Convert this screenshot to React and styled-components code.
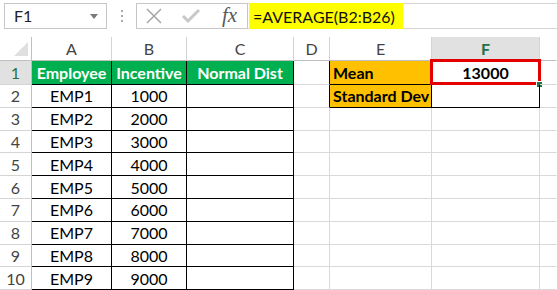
import React from 'react';
import styled, { createGlobalStyle } from 'styled-components';

const GlobalStyle = createGlobalStyle`
  html, body {
    margin: 0;
    padding: 0;
    background: #ffffff;
  }
  body {
    font-family: Lato, "Liberation Sans", sans-serif;
    overflow: hidden;
  }
`;

const GRID = '#d9d9d9';
const BLACK = '#000000';

const columns = ['A', 'B', 'C', 'D', 'E', 'F', ''];

const rows = [
  ['Employee', 'Incentive', 'Normal Dist', '', 'Mean', '13000', ''],
  ['EMP1', '1000', '', '', 'Standard Dev', '', ''],
  ['EMP2', '2000', '', '', '', '', ''],
  ['EMP3', '3000', '', '', '', '', ''],
  ['EMP4', '4000', '', '', '', '', ''],
  ['EMP5', '5000', '', '', '', '', ''],
  ['EMP6', '6000', '', '', '', '', ''],
  ['EMP7', '7000', '', '', '', '', ''],
  ['EMP8', '8000', '', '', '', '', ''],
  ['EMP9', '9000', '', '', '', '', ''],
];

function cellStyle(r, c) {
  // c: 0 = A ... 6 = G
  const s = { bg: 'transparent', color: '#000', bold: false, align: 'center', br: GRID, bb: GRID };
  if (c <= 2) {
    s.br = BLACK;
    s.bb = BLACK;
    if (r === 0) {
      s.bg = '#00b050';
      s.color = '#ffffff';
      s.bold = true;
    }
  }
  if (c === 3 && r <= 1) s.br = BLACK;
  if ((c === 4 || c === 5) && r <= 1) {
    s.br = BLACK;
    s.bb = BLACK;
  }
  if (c === 4 && r <= 1) {
    s.bg = '#ffc000';
    s.bold = true;
    s.align = 'left';
  }
  if (c === 5 && r === 0) s.bold = true;
  if (c === 6) s.br = 'transparent';
  return s;
}

function App() {
  return (
    <>
      <GlobalStyle />
      <Page>
        <FormulaBar>
          <NameBox>
            F1
            <DropArrow />
          </NameBox>
          <Grip>
            <span />
            <span />
            <span />
          </Grip>
          <FxBox>
            <svg width="18" height="18" viewBox="0 0 18 18">
              <path d="M2 2 L16 16 M16 2 L2 16" stroke="#a6a6a6" strokeWidth="1.5" fill="none" />
            </svg>
            <svg width="20" height="16" viewBox="0 0 20 16">
              <path d="M2 8 L7 13 L18 2" stroke="#c8c8c8" strokeWidth="3" fill="none" />
            </svg>
            <FxLabel>fx</FxLabel>
          </FxBox>
          <FormulaInput>
            <Highlight>=AVERAGE(B2:B26)</Highlight>
          </FormulaInput>
        </FormulaBar>

        <Sheet>
          <Corner>
            <CornerTriangle />
          </Corner>
          {columns.map((col, i) => (
            <ColHeader key={i} $active={col === 'F'} $last={i === columns.length - 1}>
              {col}
            </ColHeader>
          ))}

          {rows.map((row, r) => (
            <React.Fragment key={r}>
              <RowHeader $active={r === 0}>{r + 1}</RowHeader>
              {row.map((val, c) => {
                const s = cellStyle(r, c);
                return (
                  <Cell
                    key={c}
                    $bg={s.bg}
                    $color={s.color}
                    $bold={s.bold}
                    $align={s.align}
                    $br={s.br}
                    $bb={s.bb}
                  >
                    {val}
                    {r === 0 && c === 5 && (
                      <>
                        <Selection />
                        <FillHandle />
                      </>
                    )}
                  </Cell>
                );
              })}
            </React.Fragment>
          ))}
        </Sheet>
      </Page>
    </>
  );
}

const Page = styled.div`
  width: 557px;
  height: 290px;
  overflow: hidden;
  background: #ffffff;
`;

const FormulaBar = styled.div`
  display: flex;
  align-items: flex-start;
  height: 37px;
  padding-top: 3px;
  box-sizing: border-box;
`;

const NameBox = styled.div`
  position: relative;
  margin-left: 4px;
  width: 103px;
  height: 26px;
  box-sizing: border-box;
  border: 1px solid #c6c6c6;
  padding-left: 9px;
  font-size: 16px;
  line-height: 24px;
  color: #222;
`;

const DropArrow = styled.span`
  position: absolute;
  right: 8px;
  top: 10px;
  width: 0;
  height: 0;
  border-left: 4px solid transparent;
  border-right: 4px solid transparent;
  border-top: 5px solid #7a7a7a;
`;

const Grip = styled.div`
  width: 29px;
  height: 26px;
  display: flex;
  flex-direction: column;
  align-items: center;
  justify-content: center;
  gap: 3px;
  span {
    width: 2px;
    height: 2px;
    background: #a8a8a8;
  }
`;

const FxBox = styled.div`
  width: 112px;
  height: 26px;
  box-sizing: border-box;
  border: 1px solid #c6c6c6;
  display: flex;
  align-items: center;
  gap: 17px;
  padding: 0 0 0 8px;
  svg:nth-child(2) {
    margin-left: 1px;
  }
`;

const FxLabel = styled.span`
  font-family: "Liberation Serif", serif;
  font-style: italic;
  font-size: 21px;
  color: #595959;
  line-height: 20px;
  padding-bottom: 2px;
  margin-left: 4px;
`;

const FormulaInput = styled.div`
  flex: 1;
  height: 26px;
  box-sizing: border-box;
  border-top: 1px solid #d4d4d4;
  border-bottom: 1px solid #d4d4d4;
  display: flex;
`;

const Highlight = styled.div`
  margin: -1px 0 -1px 1px;
  width: 154px;
  background: #ffff00;
  font-size: 16px;
  line-height: 27px;
  padding-left: 4px;
  box-sizing: border-box;
  color: #111;
  white-space: nowrap;
`;

const Sheet = styled.div`
  display: grid;
  grid-template-columns: 32px 80px 75px 107px 36px 102px 108px 17px;
  grid-template-rows: 24px 24px repeat(9, 22.8px);
`;

const Corner = styled.div`
  position: relative;
  border-right: 1px solid #bfbfbf;
  border-bottom: 1px solid #bfbfbf;
`;

const CornerTriangle = styled.div`
  position: absolute;
  right: 3px;
  bottom: 4px;
  width: 0;
  height: 0;
  border-left: 14px solid transparent;
  border-bottom: 14px solid #dfdfdf;
`;

const ColHeader = styled.div`
  display: flex;
  align-items: center;
  justify-content: center;
  font-size: 16px;
  color: ${(p) => (p.$active ? '#217346' : '#444444')};
  font-weight: ${(p) => (p.$active ? 700 : 400)};
  background: ${(p) => (p.$active ? '#e1e1e1' : '#ffffff')};
  border-right: 1px solid ${(p) => (p.$last ? 'transparent' : '#d4d4d4')};
  border-bottom: 1px solid #bfbfbf;
`;

const RowHeader = styled.div`
  display: flex;
  align-items: center;
  justify-content: center;
  font-size: 16px;
  color: ${(p) => (p.$active ? '#217346' : '#444444')};
  background: ${(p) => (p.$active ? '#e1e1e1' : '#ffffff')};
  border-right: 1px solid #bfbfbf;
  border-bottom: 1px solid #d4d4d4;
`;

const Cell = styled.div`
  position: relative;
  display: flex;
  align-items: center;
  justify-content: ${(p) => (p.$align === 'left' ? 'flex-start' : 'center')};
  padding: 0 3px;
  font-size: 16px;
  white-space: nowrap;
  background: ${(p) => p.$bg};
  color: ${(p) => p.$color};
  font-weight: ${(p) => (p.$bold ? 700 : 400)};
  border-right: 1px solid ${(p) => p.$br};
  border-bottom: 1px solid ${(p) => p.$bb};
`;

const Selection = styled.div`
  position: absolute;
  left: -2px;
  top: -2px;
  right: -2px;
  bottom: -1px;
  border: 3px solid #e50000;
  pointer-events: none;
`;

const FillHandle = styled.div`
  position: absolute;
  right: -4px;
  bottom: -4px;
  width: 5px;
  height: 5px;
  background: #217346;
  border: 1px solid #ffffff;
`;

export default App;
